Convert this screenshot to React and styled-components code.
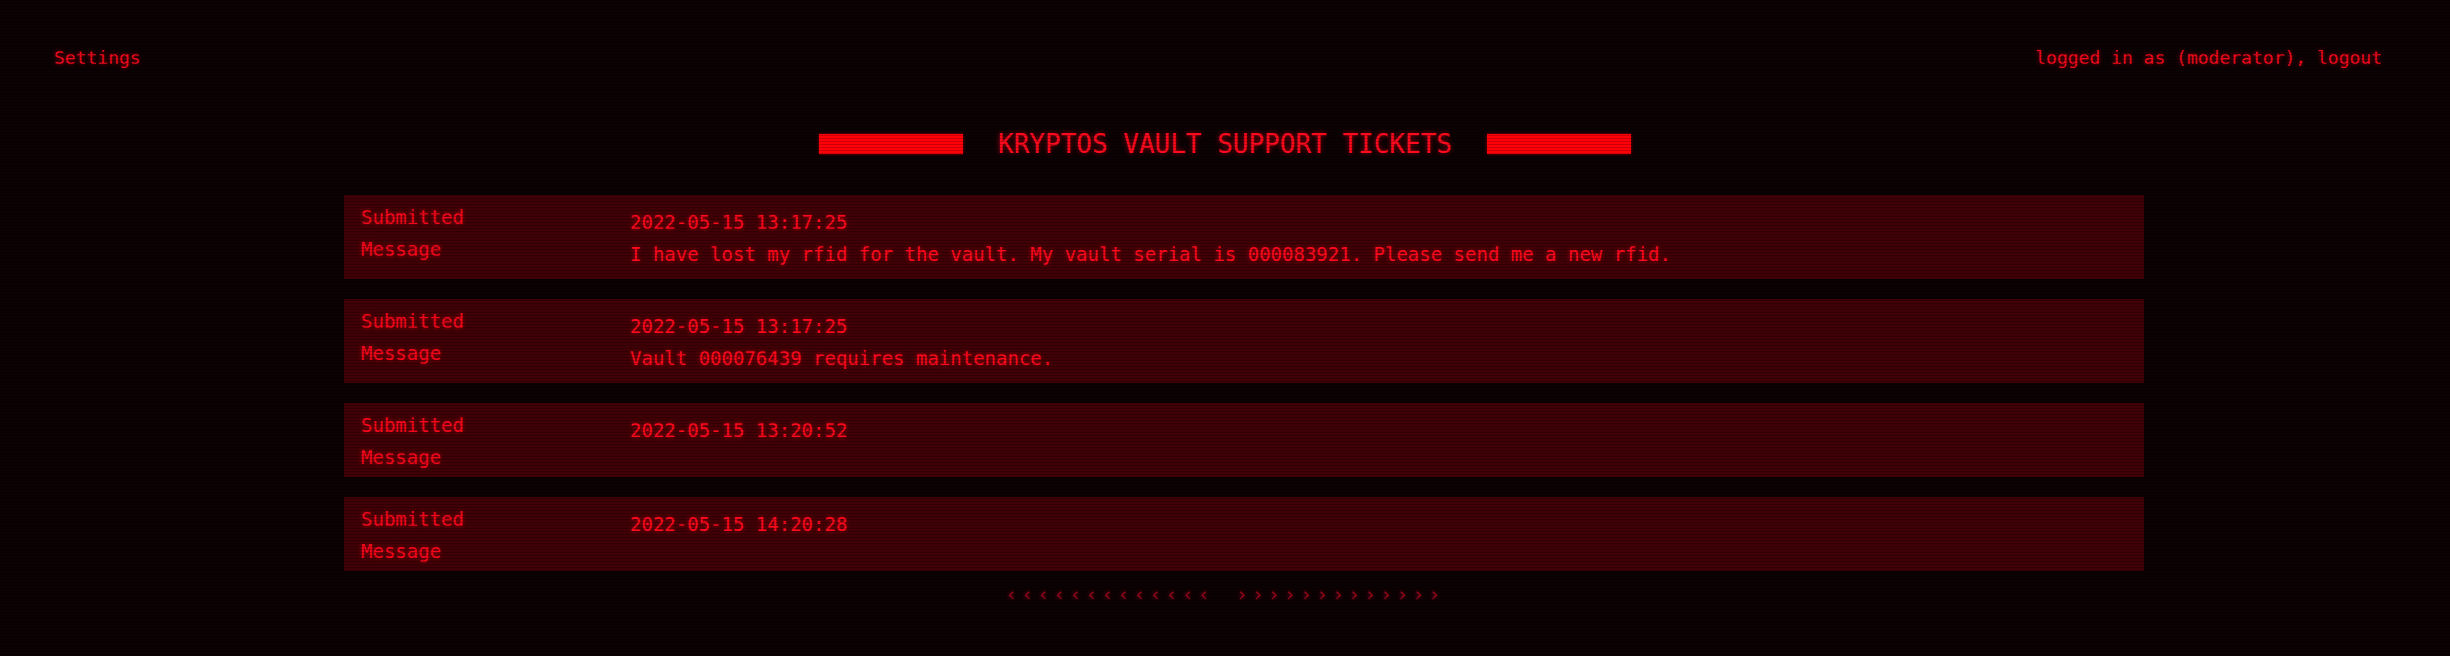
import React from 'react';
import styled, {createGlobalStyle} from 'styled-components';

const tickets = [
    {submitted: '2022-05-15 13:17:25', message: 'I have lost my rfid for the vault. My vault serial is 000083921. Please send me a new rfid.'},
    {submitted: '2022-05-15 13:17:25', message: 'Vault 000076439 requires maintenance.'},
    {submitted: '2022-05-15 13:20:52', message: ''},
    {submitted: '2022-05-15 14:20:28', message: ''},
];

const App = () => {
    return (
        <Page>
            <GlobalStyle/>
            <Header>
                <Link>Settings</Link>
                <Link>logged in as (moderator), logout</Link>
            </Header>
            <TitleRow>
                <Bar/>
                <Title>KRYPTOS VAULT SUPPORT TICKETS</Title>
                <Bar/>
            </TitleRow>
            <List>
                {
                    tickets.map((t, index) => (
                        <Card key={index}>
                            <Row>
                                <Label>Submitted</Label>
                                <Value>{t.submitted}</Value>
                            </Row>
                            <Row>
                                <Label>Message</Label>
                                <Value>{t.message}</Value>
                            </Row>
                        </Card>
                    ))
                }
            </List>
            <Pager>
                <Arrows>{'‹'.repeat(13)}</Arrows>
                <Arrows>{'›'.repeat(13)}</Arrows>
            </Pager>
        </Page>
    )
}

const GlobalStyle = createGlobalStyle`
  html, body {
    margin: 0;
    padding: 0;
    background: #0b0204;
  }

  body {
    font-family: "DejaVu Sans Mono", "Liberation Mono", monospace;
    color: #ff0a1e;
  }

  body::after {
    content: '';
    position: fixed;
    inset: 0;
    pointer-events: none;
    background: repeating-linear-gradient(
      to bottom,
      rgba(0, 0, 0, 0.2) 0,
      rgba(0, 0, 0, 0.2) 1px,
      transparent 1px,
      transparent 3px
    );
  }
`;

const Page = styled.div`
  min-height: 656px;
  padding-top: 47px;
  box-sizing: border-box;
`;

const Header = styled.div`
  display: flex;
  justify-content: space-between;
  padding: 0 68px 0 54px;
`;

const Link = styled.span`
  font-size: 18px;
  line-height: 21px;
  color: #f00a1c;
  text-shadow: 0 0 4px rgba(255, 0, 20, 0.55);
`;

const TitleRow = styled.div`
  display: flex;
  justify-content: center;
  align-items: center;
  gap: 35px;
  margin-top: 61px;
`;

const Bar = styled.div`
  width: 144px;
  height: 20px;
  background: #ff0008;
  box-shadow: 0 0 3px rgba(255, 0, 0, 0.5);
`;

const Title = styled.h1`
  margin: 0;
  font-size: 26px;
  line-height: 30px;
  font-weight: normal;
  color: #ff0a1e;
  text-shadow: 0 0 5px rgba(255, 0, 20, 0.6);
`;

const List = styled.div`
  display: flex;
  flex-direction: column;
  gap: 20px;
  width: 1800px;
  margin: 36px 0 0 344px;
`;

const Card = styled.div`
  background: #3f0006;
  padding: 11px 17px 9px;
`;

const Row = styled.div`
  display: flex;
  align-items: flex-start;
  font-size: 19px;
  line-height: 22px;
  text-shadow: 0 0 4px rgba(255, 0, 20, 0.6);
`;

const Label = styled.div`
  width: 269px;
  flex: none;
  color: #f6081c;
`;

const Value = styled.div`
  padding: 5px 0;
  color: #ff0a1e;
`;

const Pager = styled.div`
  display: flex;
  justify-content: center;
  gap: 22px;
  margin-top: 12px;
`;

const Arrows = styled.span`
  font-size: 19px;
  line-height: 22px;
  letter-spacing: 4.6px;
  color: rgba(215, 10, 45, 0.62);
  text-shadow: 0 0 4px rgba(255, 0, 30, 0.5);
`;

export default App;
